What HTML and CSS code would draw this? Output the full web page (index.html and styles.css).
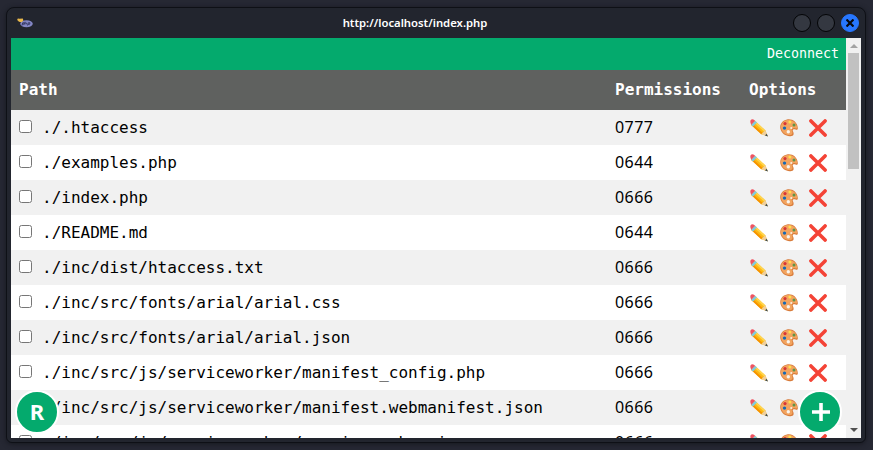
FILE: index.html
```html
<!DOCTYPE html>
<html lang="en">
<head>
<meta charset="utf-8">
<title>http://localhost/index.php</title>
<link rel="stylesheet" href="styles.css">
</head>
<body>
<svg class="defs" aria-hidden="true">
  <symbol id="pencil" viewBox="0 0 18 18">
    <path d="M5 1.700 15.200 11.300 17.700 17.200 11.300 15.300 1 5.700Z" fill="#fdb913"/>
    <path d="M5 1.700 15.200 11.300 13.900 12.600 3.700 3.100Z" fill="#ffd54f"/>
    <path d="M1 5.700 2.300 4.500 12.600 14 11.300 15.300Z" fill="#f59200"/>
    <path d="M15.200 11.300 17.700 17.200 11.300 15.300Z" fill="#efcf9e"/>
    <path d="M16.600 14.700 18 17.500 15 16.500Z" fill="#37474f"/>
    <path d="M5 1.700 7 3.500 3 7.600 1 5.700Z" fill="#7fcbe0"/>
    <path d="M.4 3.200Q0 1.600 1.400.6T4.200.9L5.100 1.800 1.100 5.800Z" fill="#ef5362"/>
  </symbol>
  <symbol id="palette" viewBox="0 0 18 18">
    <path d="M7 .5C12-.6 17.5 3 17.8 9c.1 1.7-1 2.1-2.2 1.6-1.9-.8-3.6.1-2.600 2 .8 1.4 1.3 3.7-1.5 4.4C6.900 18 1.500 15 .4 9.800-.4 5.400 2.200 1.500 7 .5Z" fill="#d97c3b"/>
    <path d="M7.200 1.100C11.800.1 16.500 3.300 17.100 8.300c.1 1.300-.8 1.400-1.800 1-2.400-.8-4.300.8-3.300 2.700.8 1.600.8 3.400-1 3.900C6.800 16.800 2 13.800 1.100 9.500.3 5.300 3 2 7.200 1.100Z" fill="#f2a45f"/>
    <circle cx="5" cy="4.600" r="1.600" fill="#d93636"/>
    <circle cx="9.900" cy="3.100" r="1.500" fill="#ffe04a"/>
    <circle cx="14" cy="6" r="1.500" fill="#609447"/>
    <circle cx="4.500" cy="9.100" r="1.700" fill="#1769b5"/>
    <circle cx="8.300" cy="12.700" r="1.700" fill="#f8f3ed"/>
    <circle cx="11.300" cy="9" r="1.100" fill="#f8eee2"/>
  </symbol>
  <symbol id="cross" viewBox="0 0 18 18">
    <path d="M1.900 1.900 16.100 16.100M16.100 1.900 1.900 16.100" stroke="#f44336" stroke-width="3.600" stroke-linecap="round"/>
  </symbol>
</svg>
<main class="window">
  <header class="titlebar">
    <svg class="favicon" viewBox="0 0 16 10">
      <ellipse cx="9.500" cy="5.700" rx="6.300" ry="3.500" fill="#8386c4"/>
      <path d="M5 7.500 5.700 4.800H7.200L6.800 6.300H5.500M8 3.800 7.500 6.500M8 5H9.500L9.100 6.500M10.500 7.500 11.200 4.800H13L12.600 6.300H11" stroke="#292d55" fill="none" stroke-width=".8"/>
      <path d="M.2 2Q.3.2 2.200.7L5.800.5 6.400 2.500 4.500 4.200 2 3.800Z" fill="#e8b84b"/>
    </svg>
    <h1 class="title">http://localhost/index.php</h1>
    <div class="controls">
      <span class="control"></span>
      <span class="control"></span>
      <span class="control close"><svg viewBox="0 0 8 8"><path d="M.5.5 7.500 7.500M7.500.5.5 7.500" stroke="#07090f" stroke-width="2.200"/></svg></span>
    </div>
  </header>
  <section class="viewport">
    <div class="page">
      <nav class="nav"><a class="logout">Deconnect</a></nav>
      <div class="row head"><span>Path</span><span>Permissions</span><span>Options</span></div>
      <div id="files"></div>
      <button class="fab left">R</button>
      <button class="fab right"><svg viewBox="0 0 18 18"><path d="M9 0V18M0 9H18" stroke="#fff" stroke-width="3.600"/></svg></button>
    </div>
    <div class="scrollbar"><i class="arrow up"></i><i class="thumb"></i><i class="arrow down"></i></div>
  </section>
</main>
<script src="files.js"></script>
</body>
</html>
```
FILE: styles.css
```css
* { box-sizing: border-box; }
body {
  margin: 0;
  height: 450px;
  overflow: hidden;
  background: #262833;
  padding: 7px 8px 7px 6px;
}
.defs { position: absolute; width: 0; height: 0; }
.window {
  width: 860px;
  height: 436px;
  border: 1px solid #0e1016;
  border-radius: 8px 8px 6px 6px;
  background: #22252e;
  padding: 0 4px;
  box-shadow: 0 1px 5px #16181f;
}
.titlebar {
  height: 30px;
  display: grid;
  grid-template-columns: 28px 1fr 70px;
  align-items: center;
}
.favicon { width: 16px; height: 10px; margin: 0 0 1px 6px; }
.title {
  margin: 0;
  text-align: center;
  color: #fff;
  font: 600 11.3px/30px "Noto Sans", sans-serif;
}
.controls { display: flex; gap: 6px; justify-content: flex-end; padding-right: 2px; }
.control {
  width: 18px;
  height: 18px;
  border: 1px solid #030406;
  border-radius: 50%;
  background: #343841;
}
.close { display: grid; place-items: center; background: #2777ff; border-color: #2777ff; }
.close svg { width: 8px; height: 8px; }
.viewport { display: flex; width: 850px; height: 400px; overflow: hidden; }
.page {
  position: relative;
  width: 835px;
  height: 400px;
  overflow: hidden;
  background: #fff;
  font: 16px/35px "DejaVu Sans Mono", monospace;
  color: #000;
}
.nav {
  height: 32px;
  background: #04aa6d;
  text-align: right;
  padding-right: 7px;
}
.logout { display: block; color: #fff; font-size: 13.3px; line-height: 32px; }
.row {
  display: grid;
  grid-template-columns: 596px 134px 1fr;
  height: 35px;
  padding-left: 8px;
  background: #fff;
  white-space: pre;
}
.row:nth-child(odd) { background: #f1f1f1; }
.row.head { height: 40px; line-height: 39px; background: #5f615f; color: #fff; font-weight: bold; }
.path { display: flex; align-items: flex-start; }
.path input { width: 13px; height: 13px; margin: 10px 10px 0 0; }
.perm { font: 16px/34px "Noto Sans", sans-serif; letter-spacing: .45px; }
.options { display: flex; gap: 11.7px; padding: 9px 0 0 1px; }
.options svg { width: 18px; height: 18px; }
.fab {
  position: absolute;
  top: 352px;
  width: 44px;
  height: 44px;
  padding: 0;
  display: grid;
  place-items: center;
  border: 2px solid #fff;
  border-radius: 50%;
  background: #04aa6d;
  color: #fff;
  font: bold 22px/1 "Noto Sans", sans-serif;
}
.left { left: 4px; padding-bottom: 2px; }
.right { left: 787px; padding-left: 2px; }
.right svg { width: 18px; height: 18px; }
.scrollbar {
  width: 15px;
  display: flex;
  flex-direction: column;
  align-items: center;
  background: #f1f1f1;
}
.arrow { width: 0; height: 0; border: 4px solid transparent; }
.up { border-top: 0; border-bottom-color: #a3a3a3; margin: 6px 0 5px; }
.thumb { width: 11px; height: 116px; background: #c1c1c1; }
.down { border-bottom: 0; border-top-color: #505050; margin-top: auto; margin-bottom: 6px; }
```
FILE: files.js
```js
const files = [
  ["./.htaccess", "0777"],
  ["./examples.php", "0644"],
  ["./index.php", "0666"],
  ["./README.md", "0644"],
  ["./inc/dist/htaccess.txt", "0666"],
  ["./inc/src/fonts/arial/arial.css", "0666"],
  ["./inc/src/fonts/arial/arial.json", "0666"],
  ["./inc/src/js/serviceworker/manifest_config.php", "0666"],
  ["./inc/src/js/serviceworker/manifest.webmanifest.json", "0666"],
  ["./inc/src/js/serviceworker/service.webmani", "0666"]
];
const icon = name => `<svg><use href="#${name}"/></svg>`;
document.getElementById("files").innerHTML = files.map(([path, perm]) =>
  `<div class="row"><label class="path"><input type="checkbox">${path}</label><span class="perm">${perm}</span><span class="options">${icon("pencil")}${icon("palette")}${icon("cross")}</span></div>`
).join("");
```
